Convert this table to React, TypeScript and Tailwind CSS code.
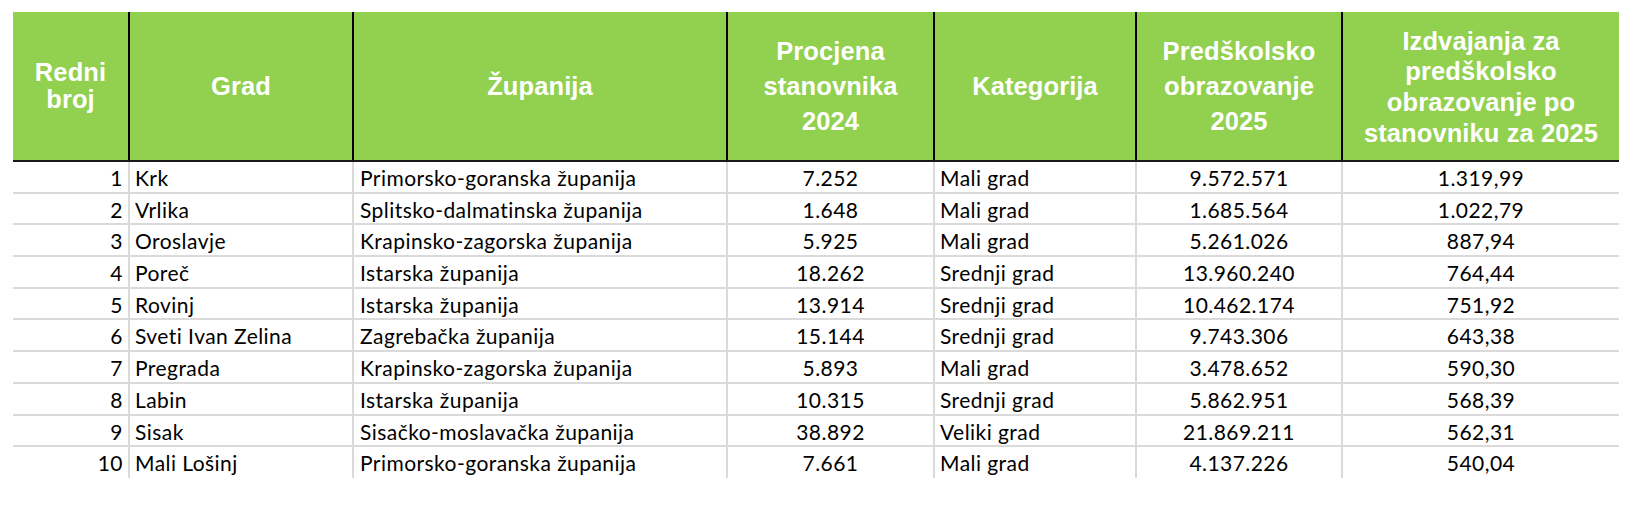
const COLS = "grid grid-cols-[117px_224px_374px_207px_202px_206px_276px]";

const rows = [
  { n: 1, grad: "Krk", zup: "Primorsko-goranska županija", pop: "7.252", kat: "Mali grad", pred: "9.572.571", izd: "1.319,99" },
  { n: 2, grad: "Vrlika", zup: "Splitsko-dalmatinska županija", pop: "1.648", kat: "Mali grad", pred: "1.685.564", izd: "1.022,79" },
  { n: 3, grad: "Oroslavje", zup: "Krapinsko-zagorska županija", pop: "5.925", kat: "Mali grad", pred: "5.261.026", izd: "887,94" },
  { n: 4, grad: "Poreč", zup: "Istarska županija", pop: "18.262", kat: "Srednji grad", pred: "13.960.240", izd: "764,44" },
  { n: 5, grad: "Rovinj", zup: "Istarska županija", pop: "13.914", kat: "Srednji grad", pred: "10.462.174", izd: "751,92" },
  { n: 6, grad: "Sveti Ivan Zelina", zup: "Zagrebačka županija", pop: "15.144", kat: "Srednji grad", pred: "9.743.306", izd: "643,38" },
  { n: 7, grad: "Pregrada", zup: "Krapinsko-zagorska županija", pop: "5.893", kat: "Mali grad", pred: "3.478.652", izd: "590,30" },
  { n: 8, grad: "Labin", zup: "Istarska županija", pop: "10.315", kat: "Srednji grad", pred: "5.862.951", izd: "568,39" },
  { n: 9, grad: "Sisak", zup: "Sisačko-moslavačka županija", pop: "38.892", kat: "Veliki grad", pred: "21.869.211", izd: "562,31" },
  { n: 10, grad: "Mali Lošinj", zup: "Primorsko-goranska županija", pop: "7.661", kat: "Mali grad", pred: "4.137.226", izd: "540,04" },
];

function HeadCell({ children, last, leading }: { children: React.ReactNode; last?: boolean; leading: string }) {
  return (
    <div
      className={`flex items-center justify-center text-center px-1 ${leading} ${
        last ? "" : "border-r-2 border-black"
      }`}
    >
      <div>{children}</div>
    </div>
  );
}

export default function App() {
  return (
    <div className="min-h-[507px] bg-white pl-[13px] pt-[12px]">
      <div className="w-[1606px]">
        {/* Header */}
        <div
          className={`${COLS} h-[150px] bg-[#92d050] border-b-2 border-[#1a1a1a] text-white font-bold text-[25.5px] tracking-[0.1px] font-['Liberation_Sans',Arial,sans-serif]`}
        >
          <HeadCell leading="leading-[27px]">
            Redni
            <br />
            broj
          </HeadCell>
          <HeadCell leading="leading-[30px]">Grad</HeadCell>
          <HeadCell leading="leading-[30px]">Županija</HeadCell>
          <HeadCell leading="leading-[35px]">
            Procjena
            <br />
            stanovnika
            <br />
            2024
          </HeadCell>
          <HeadCell leading="leading-[30px]">Kategorija</HeadCell>
          <HeadCell leading="leading-[35px]">
            Predškolsko
            <br />
            obrazovanje
            <br />
            2025
          </HeadCell>
          <HeadCell leading="leading-[30.6px] pt-[2px]" last>
            Izdvajanja za
            <br />
            predškolsko
            <br />
            obrazovanje po
            <br />
            stanovniku za 2025
          </HeadCell>
        </div>

        {/* Body */}
        <div className="font-['Lato','Noto_Sans',sans-serif] text-[21px] tracking-[0.45px] text-black">
          {rows.map((r, i) => {
            const lastRow = i === rows.length - 1;
            return (
              <div
                key={r.n}
                className={`${COLS} ${
                  lastRow ? "h-[28px]" : "h-[31.7px] border-b-2 border-[#dadada]"
                } leading-[31px]`}
              >
                <div className="border-r-2 border-[#dadada] text-right pr-[5px]">{r.n}</div>
                <div className="border-r-2 border-[#dadada] pl-[5px] whitespace-nowrap">{r.grad}</div>
                <div className="border-r-2 border-[#dadada] pl-[6px] whitespace-nowrap">{r.zup}</div>
                <div className="border-r-2 border-[#dadada] text-center">{r.pop}</div>
                <div className="border-r-2 border-[#dadada] pl-[5px] whitespace-nowrap">{r.kat}</div>
                <div className="border-r-2 border-[#dadada] text-center">{r.pred}</div>
                <div className="text-center">{r.izd}</div>
              </div>
            );
          })}
        </div>
      </div>
    </div>
  );
}
